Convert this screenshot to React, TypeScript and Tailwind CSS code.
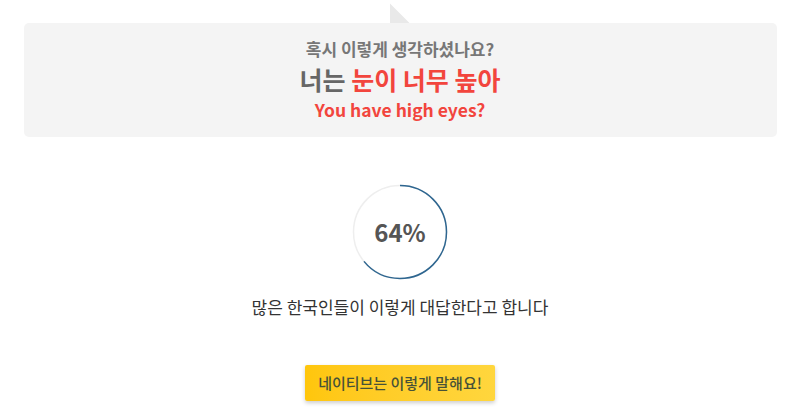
import React from "react";

const font = { fontFamily: '"Noto Sans CJK KR", "Noto Sans", sans-serif' };

function Progress({ percent }: { percent: number }) {
  const r = 46.5;
  const c = 2 * Math.PI * r;
  return (
    <div className="relative w-[96px] h-[96px]">
      <svg width="96" height="96" viewBox="0 0 96 96" className="absolute inset-0">
        <circle cx="48" cy="48" r={r} fill="none" stroke="#eeeeee" strokeWidth="1.5" />
        <circle
          cx="48"
          cy="48"
          r={r}
          fill="none"
          stroke="#2e6690"
          strokeWidth="1.5"
          strokeDasharray={`${(c * percent) / 100} ${c}`}
          transform="rotate(-90 48 48)"
        />
      </svg>
      <div className="absolute inset-0 flex items-center justify-center text-[24px] font-bold text-[#555555]">
        {percent}%
      </div>
    </div>
  );
}

export default function App() {
  return (
    <div className="w-[800px] h-[420px] bg-white flex flex-col items-center overflow-hidden" style={font}>
      {/* question bubble */}
      <div className="relative w-[753px] mt-[23px] h-[114px] bg-[#f4f4f4] rounded-[5px] flex flex-col items-center pt-[14px]">
        <div
          className="absolute left-[366px] -top-[20px] w-[20px] h-[20px] bg-[#e9e9e9]"
          style={{ clipPath: "polygon(0 0, 0 100%, 100% 100%)" }}
        />
        <div className="text-[17px] leading-[24px] font-bold text-[#777777]">혹시 이렇게 생각하셨나요?</div>
        <div className="text-[25px] leading-[32px] font-bold text-[#666666] mt-[2px]">
          너는 <span className="text-[#f2453d]">눈이 너무 높아</span>
        </div>
        <div className="text-[17.5px] leading-[24px] font-bold text-[#f2453d] mt-[3px]">You have high eyes?</div>
      </div>

      <div className="mt-[47px]">
        <Progress percent={64} />
      </div>

      <div className="mt-[15px] text-[17px] leading-[24px] text-[#333333]">많은 한국인들이 이렇게 대답한다고 합니다</div>

      <button className="mt-[46px] w-[190px] h-[36px] rounded-[2px] bg-gradient-to-r from-[#ffc60b] to-[#ffd63d] text-[15px] font-medium text-[#485238] shadow-[0_2px_4px_rgba(0,0,0,0.2)]">
        네이티브는 이렇게 말해요!
      </button>
    </div>
  );
}
